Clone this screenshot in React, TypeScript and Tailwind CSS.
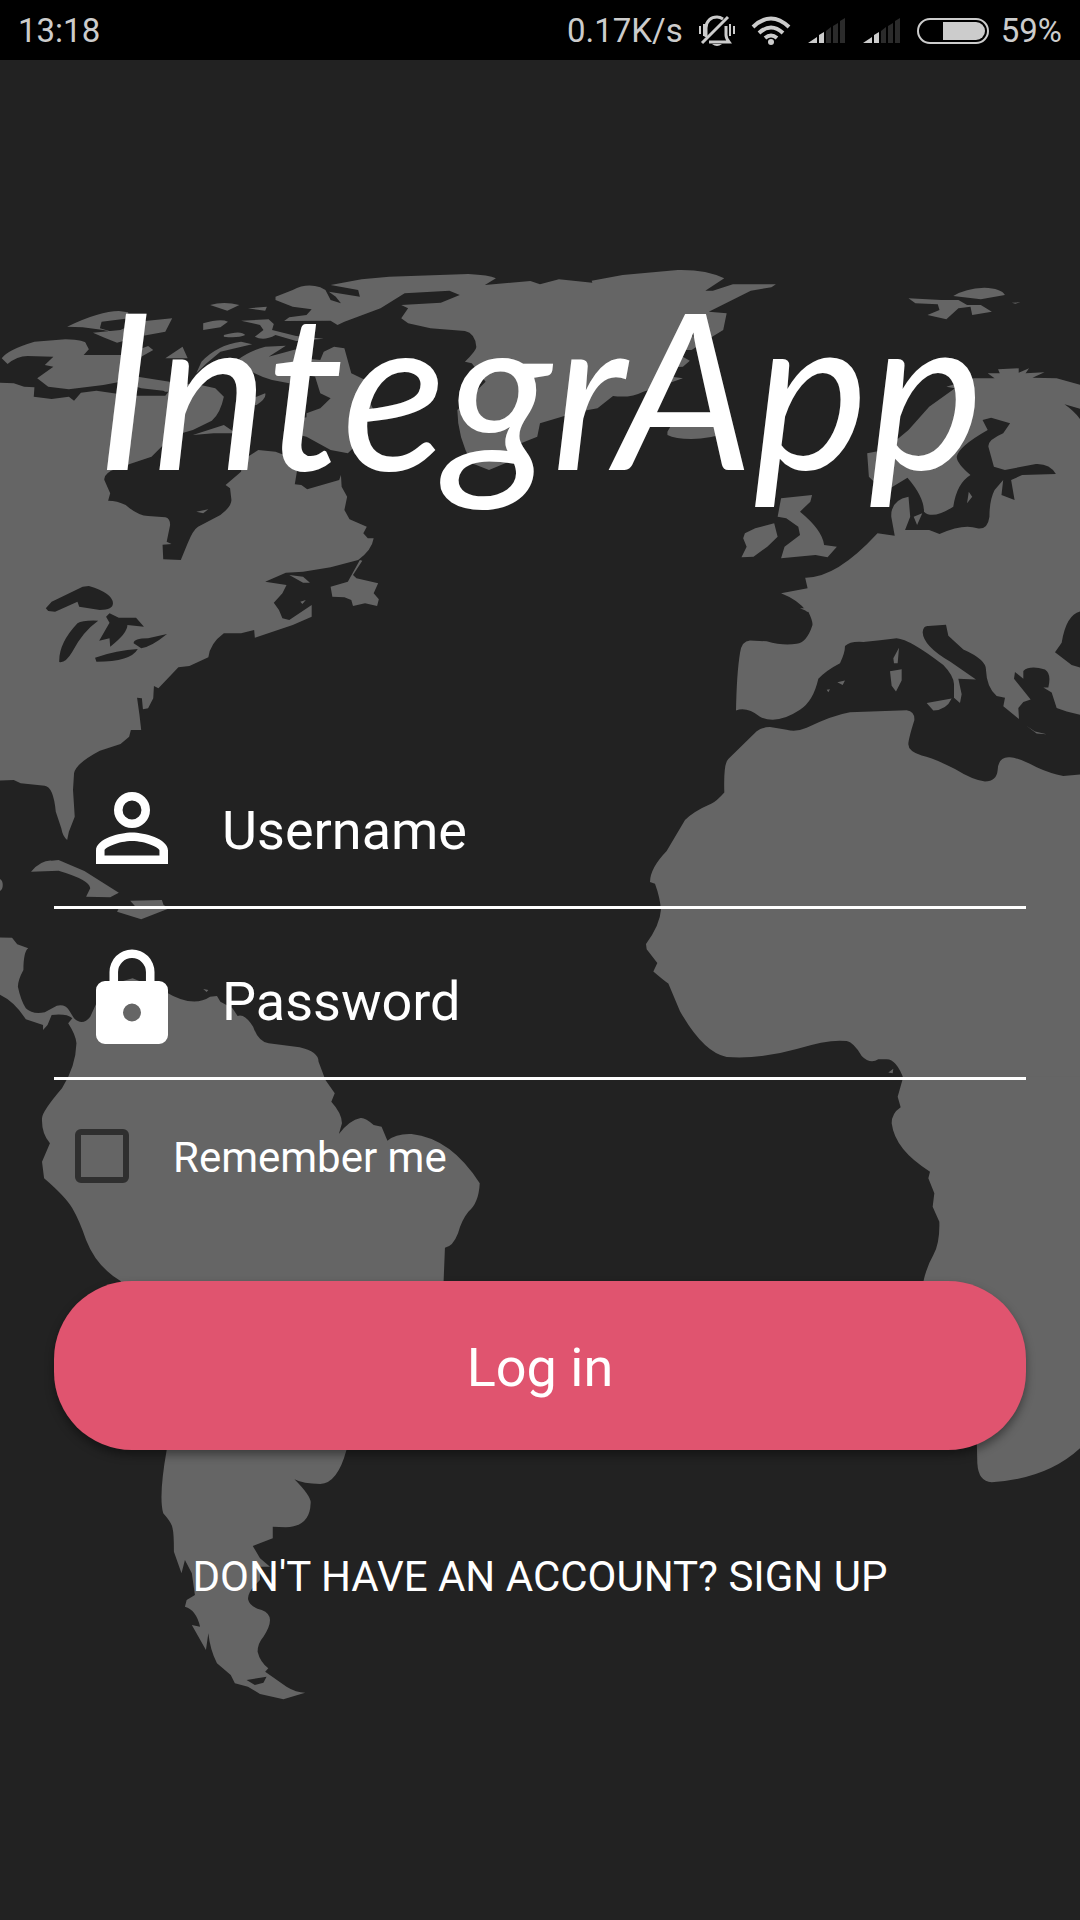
import { useState } from 'react';

function WorldMap() {
  return (
    <svg
      aria-hidden="true"
      viewBox="0 0 1080 1920"
      preserveAspectRatio="xMidYMin slice"
      className="absolute inset-0 h-full w-full"
      fill="#656565"
    >
      {/* Americas, Greenland and Iceland */}
      <g transform="translate(0 250) scale(.34439 .33333)">
        <path d="M-9 398L40 400 70 410 100 412 98 440 150 447 200 440 215 452 235 428 280 422 380 437 480 437 500 410 560 400 625 415 650 440 Q640 490 615 512L560 540 500 558 440 620 340 655 Q300 670 303 690L320 730 314 752 Q340 752 365 765 400 797 430 798L480 802 Q494 805 494 825L484 875 498 882 472 884 474 928 525 930 545 880 Q560 840 575 830L640 795Q672 770 672 750L668 715 655 705 700 665 702 645 690 640 750 600 800 605 878 635 862 665 856 703 875 705 892 718 985 690 990 675 992 710 1008 740 1000 780 1015 808 1065 830 1055 850 1068 865 1085 865 Q1080 900 1040 930L960 952 880 965 830 968 770 995 832 1005 820 1030 795 1058 810 1080 820 1105 840 1110 905 1065 905 1100 850 1125 740 1163 738 1140 700 1150 650 1150 Q610 1180 605 1222L550 1248 518 1252 460 1315 447 1308 445 1345 430 1375 415 1378 412 1345 398 1343 405 1395 410 1440 380 1440 375 1460 350 1482 290 1502 Q220 1540 215 1570L212 1620 217 1700 200 1745 195 1770 Q182 1760 178 1735L162 1685Q155 1610 130 1607L60 1600 40 1590 -9 1592Z" />
        <path d="M1045 930L1010 995 960 1010 965 1040 1000 1042 1020 1050 1025 1068 1060 1060 1095 1068 1100 1048 1085 1030 1098 1000 1035 985 1025 975 1052 932ZM840 975L880 980 900 998 880 998ZM570 785L605 778 590 790ZM675 612L700 598 690 615ZM872 1055L888 1050 878 1062Z" />
        <path d="M90 1865Q120 1830 150 1832L170 1830 245 1863 345 1928 320 1942 250 1940 262 1915Q262 1890 170 1862ZM378 1952L470 1950 475 1965 492 1975 410 2008 340 1985 345 1975 395 1972ZM-9 1885Q8 1885 8 1905 8 1925 -9 1925ZM560 555L650 525 685 550 620 550Z" />
        {/* Arctic archipelago */}
        <path d="M5 325Q20 300 100 275L190 268 Q250 270 250 282L258 298 243 315 370 315 400 300 430 288 445 300 410 320 390 350 400 380 520 400 500 425 410 415 350 395 300 405 200 418 140 410 108 385 155 350 130 345 155 320 80 318 Q50 318 22 342ZM195 230Q290 183 345 183L372 187 375 205 295 215 290 235 340 250 300 240 240 232ZM270 248L350 240 400 215 500 205 480 245 400 260 340 278 300 262ZM610 165Q650 153 695 165L660 182ZM720 175L775 170 770 182ZM590 220Q640 205 662 215L640 232 590 240ZM650 255Q700 240 712 255 690 265 650 260ZM700 212L780 208 795 222 790 240 860 258 940 266 860 273 800 255 Q765 275 740 260L765 240 755 225ZM480 325L530 290 545 325ZM585 335Q630 285 700 275L732 283 640 305 600 340 570 370ZM690 330Q720 305 770 290L830 287 780 320 860 298 885 300 880 325 930 330 940 305 970 290 1000 295 1020 370 1080 400 1080 440 1050 430 1075 460 1090 490 1020 485 Q1045 520 1043 545L1040 580 1010 610 960 600 890 560 830 545 850 510 890 502 890 490 930 475 960 445 930 430 915 380 855 370 840 400 790 390 Q720 370 690 330ZM720 450L770 430 Q775 445 745 465L700 470ZM440 405L520 400 520 425 480 425Z" />
        <path d="M800 140L850 120Q890 98 930 112L945 120 960 150 990 160 975 140 955 125 1045 140 1040 120 960 105 1050 88 1130 80 1360 72Q1420 75 1440 85L1408 105 1540 93 1568 103 1623 88 1720 98 1718 92 1808 75 1968 60Q2050 58 2103 85L2048 122 2070 122 2128 103 2253 103 2240 112 2180 122 2058 185 2110 190 2100 240 2068 260 2008 300 1948 300 2003 332 1983 350 1950 352 1913 375 1983 385Q1900 415 1868 425 1830 445 1780 438L1735 475 1680 485 1568 520 1560 560 1500 585 1490 630 1420 660 1370 640Q1328 560 1328 480L1410 395 1370 340 1350 335Q1385 300 1383 290 1380 250 1350 243L1250 235 1185 220 1165 205 1185 175 1165 165 1280 158 1335 135 1305 122 1175 130 1105 175 1000 215 980 225 960 212 825 213 840 202 890 195 905 178 850 170 800 150Z" />
        <path d="M1938 545L1963 500 1985 508 2038 493 2038 503 2118 485 2120 545Q2060 567 2008 567 1960 567 1938 555Z" />
        {/* South America */}
        <path d="M-9 2062L35 2063 50 2083 82 2095Q68 2105 68 2160 52 2190 52 2210 60 2250 75 2275 95 2295 130 2287L165 2267Q190 2262 200 2280L215 2305Q240 2330 262 2300L280 2260 300 2210 385 2185 480 2225Q560 2275 610 2240L630 2238 640 2255 675 2275 690 2298Q710 2290 735 2330 750 2375 780 2380L870 2392Q925 2405 925 2435L945 2490 972 2530 962 2555Q993 2590 993 2620L984 2652Q1015 2610 1047 2604 1060 2602 1085 2625L1108 2630 1125 2672Q1150 2650 1195 2652 1310 2665 1393 2800 1390 2860 1360 2885 1340 2910 1330 2950 1315 2990 1292 2993L1288 3095 1230 3270 1130 3330 1080 3450 1006 3600Q980 3700 930 3702 880 3702 855 3688 905 3740 902 3760 900 3830 830 3832L792 3830 792 3865 734 3888 755 3925 784 3950 755 3950 755 3990 Q715 4030 721 4050 725 4070 760 4080 784 4090 784 4110 784 4130 765 4160 748 4180 748 4205 755 4235 779 4255L770 4265 832 4310Q860 4328 886 4328L823 4348 755 4332 720 4310 682 4300 670 4275 630 4240 Q610 4200 605 4150L598 4200 557 4125 581 4130Q570 4080 537 4070L542 4050 566 4035 557 3970 537 3930 527 3970 505 3905Q505 3850 501 3835 500 3820 474 3790 460 3740 484 3600L480 3500 440 3300 350 3093Q280 3050 250 2970 230 2910 210 2875 190 2840 128 2785L122 2735 145 2680Q120 2650 122 2605 122 2585 180 2515 220 2450 222 2380 220 2355 198 2320L210 2305Q195 2290 150 2295L138 2325 125 2340 125 2325 75 2308Q40 2250 -9 2230ZM590 2217L605 2220 600 2226Z" />
        <path fill="#222" d="M133 1075L150 1055 240 1010 258 1008Q328 1030 328 1060 328 1080 290 1080L230 1070 225 1055 160 1085 140 1083ZM172 1236Q170 1180 225 1120 240 1110 285 1112 240 1145 210 1205 190 1240 172 1236ZM288 1172L318 1118 308 1100 318 1090 345 1103 395 1103 418 1130 370 1125Q370 1150 320 1190L318 1165ZM276 1223Q340 1200 400 1197 380 1235 280 1235ZM388 1180Q388 1165 430 1165L485 1152Q440 1190 410 1195ZM716 4290L774 4280 765 4298 740 4305ZM1990 250L2030 238 2015 260ZM2020 275L2045 270 2035 290Z" />
      </g>
      {/* Northern Europe and Svalbard */}
      <g transform="translate(540 250) scale(.34439 .33333)">
        <path d="M1070 145L1165 150 1215 150 1240 165 1280 165 1312 185 1255 195 1250 170 1215 175 1180 208 1125 195 1160 180 1155 163 1090 160ZM1200 138Q1235 115 1290 113 1340 115 1350 135L1280 148ZM1370 158L1395 157 1380 161Z" />
        <path d="M1580 408L1500 385 1430 383 1465 367 1410 370 1420 355 1390 368 1390 355 1330 358 1335 370 1300 370 1320 385 1260 385 1180 410 1205 415 1130 470 1070 540 1000 600 950 610 955 680 1000 725 1067 683Q1115 740 1115 785 1140 810 1200 770 1210 700 1250 675 1210 640 1210 620 1215 590 1300 540L1285 510 1310 503 1365 520 1345 550Q1300 570 1302 590L1318 650 1350 660 1440 642 Q1480 640 1498 672L1400 675 1368 690 1378 750 1340 735 1345 690 1320 720Q1305 750 1305 800 1300 840 1270 835 1230 820 1160 852L1130 840 1060 840 1075 800 1070 740Q1018 750 1020 800L1030 857 980 850Q860 985 770 983L777 1015 700 1030Q750 1050 775 1085L1580 1085ZM1085 800L1110 790 1095 825ZM1245 725L1255 740 1240 760Z" />
        <path d="M700 745L790 735 785 755 755 785Q820 840 825 885L862 890 835 922 800 915 700 925 710 890 755 855 750 830 715 805 690 800ZM595 850L625 835 680 820 690 860 660 890 620 920 585 922 600 890 590 865Z" />
        <path fill="#222" d="M1523 463L1580 480 1580 525Q1560 490 1523 463Z" />
      </g>
      {/* Southern Europe, Mediterranean and North Africa */}
      <g transform="translate(600 560) scale(.33333 .34439)">
        <path d="M1450 140L600 140 625 150Q640 180 637 190 620 240 590 243 550 250 500 236L450 234Q425 235 420 270 410 330 408 437 440 425 480 455 530 480 600 435 640 410 655 345 680 320 720 300 735 270 735 250 750 235 790 238L840 233 890 227Q930 230 1030 305 1060 335 1062 360L1062 400 1080 415 1085 390 1075 345 1128 347 1050 295Q970 250 968 210 970 190 985 192L1038 188 1045 220 1090 260Q1160 290 1158 320 1160 370 1190 395L1215 400 1210 425 1257 462 1255 430 1270 412 1292 405 1242 345 1245 325 1270 345 1270 322Q1290 305 1335 318 1355 330 1345 370L1330 370 1355 385 1370 430 1400 440 1450 452Z" />
        <path d="M870 323L905 317 905 350 888 382 875 365ZM880 285L897 255 893 300 882 300ZM980 415L1055 402Q1040 435 1000 437ZM712 355L735 350 728 363ZM680 377L690 375 685 384ZM1280 482L1305 498 1340 506 1310 504Z" />
        <path d="M1450 622L1390 627Q1350 620 1310 602 1260 575 1230 573 1195 570 1193 610 1190 643 1155 643 1120 640 1065 607 1000 575 965 568 925 555 925 535 925 520 943 465 945 440 920 436L750 442Q700 450 620 487 590 500 560 493L510 485Q490 485 470 497L385 578Q370 590 373 675 350 700 335 707 280 730 255 755L200 845Q150 895 150 935L165 940Q180 980 183 1015 180 1060 138 1115L140 1130 172 1170 160 1195Q190 1220 205 1230L240 1310Q310 1430 380 1443 480 1450 590 1420 690 1390 740 1397 760 1400 785 1440 810 1465 835 1450L860 1450Q890 1450 912 1510L1450 1510ZM865 1488L880 1477 878 1490Z" />
        <path fill="#222" d="M1365 268L1385 240Q1400 150 1450 148L1450 315 1415 305Z" />
      </g>
      {/* Southern Africa */}
      <path
        transform="translate(600 1030) scale(.33333)"
        d="M910 140L893 200 902 232Q875 250 875 280 885 360 990 425L985 445 1003 490 998 530 1018 575Q1020 640 1000 675 980 710 970 755L960 900 1080 1100 1130 1220 1132 1300Q1135 1355 1175 1357 1350 1345 1450 1245L1450 140Z"
      />
    </svg>
  );
}

function StatusIcons() {
  return (
    <div className="flex items-center gap-4">
      <svg aria-label="Muted" viewBox="0 0 36 32" className="h-8 w-9" fill="none" stroke="#ccc" strokeWidth="2">
        <path d="M7 22V13C7 6 12 2 18 2q3 0 6 2M27 11v9q0 3 3 7H10" strokeWidth="3" />
        <path d="M3 28 29 2" strokeWidth="3" />
        <path d="M1 11v8M5 9v12M31 9v12M35 11v8" />
        <path d="M13 29h10q-5 4-10 0z" fill="#ccc" stroke="none" />
      </svg>
      <svg aria-label="Wi-Fi" viewBox="0 0 40 30" className="h-[30px] w-10" fill="none" stroke="#ccc" strokeWidth="4">
        <path d="M2 11Q20-6 38 11M8 17Q20 6 32 17M14 22Q20 17 26 22" />
        <circle cx="20" cy="26" r="3" fill="#ccc" stroke="none" />
      </svg>
      {[1, 2].map((sim) => (
        <svg key={sim} aria-label={`SIM ${sim} signal`} viewBox="0 0 37 26" className="mr-px ml-px h-[26px] w-[37px]">
          <path fill="#ccc" d="M0 25 9 19V25ZM11 17 16 14V25H11Z" />
          <path fill="#2b2b2b" d="M18 13 23 9V25H18ZM25 8 30 5V25H25ZM32 3 37 0V25H32Z" />
        </svg>
      ))}
      <svg aria-label="Battery" viewBox="0 0 72 26" className="-mr-1 h-[26px] w-[72px]">
        <rect x="1" y="1" width="70" height="24" rx="12" fill="none" stroke="#ccc" strokeWidth="2" />
        <path d="M26 4H59a9 9 0 0 1 0 18H26Z" fill="#ccc" />
      </svg>
    </div>
  );
}

const fieldRow = 'flex h-[171px] items-center border-b-[3px] border-white pt-3 pl-6';
const fieldInput =
  'ml-9 h-20 min-w-0 flex-1 bg-transparent pt-1 text-[54px] text-white outline-none placeholder:text-white placeholder:opacity-100';

export default function App() {
  const [remember, setRemember] = useState(false);

  return (
    <div className="relative flex min-h-screen flex-col overflow-hidden bg-[#222] font-[Roboto,sans-serif] text-white">
      <WorldMap />

      <header className="relative flex h-[60px] items-center justify-between bg-black px-[18px] pt-[2px] text-[33px] text-[#ccc]">
        <time>13:18</time>
        <div className="flex items-center gap-4">
          <span>0.17K/s</span>
          <StatusIcons />
          <span>59%</span>
        </div>
      </header>

      <main className="relative flex flex-col px-[54px]">
        <h1 className="mt-[206px] text-center font-[Lato,sans-serif] text-[218px] leading-[240px] whitespace-nowrap italic">
          IntegrApp
        </h1>

        <form className="mt-[232px] flex flex-col" onSubmit={(e) => e.preventDefault()}>
          <div className={fieldRow}>
            <label htmlFor="username" aria-label="Username">
              <svg viewBox="0 0 24 24" className="size-[108px]" fill="#fff">
                <path d="M12 5.9a2.1 2.1 0 1 1 0 4.2 2.1 2.1 0 0 1 0-4.2m0 9c2.970 0 6.100 1.460 6.100 2.100v1.100H5.900V17c0-.64 3.130-2.100 6.100-2.100M12 4a4 4 0 1 0 0 8 4 4 0 0 0 0-8m0 9c-2.670 0-8 1.340-8 4v3h16v-3c0-2.660-5.330-4-8-4" />
              </svg>
            </label>
            <input id="username" type="text" placeholder="Username" className={fieldInput} />
          </div>

          <div className={fieldRow}>
            <label htmlFor="password" aria-label="Password">
              <svg viewBox="0 0 24 24" className="size-[108px]" fill="#fff">
                <path d="M18 8h-1V6A5 5 0 0 0 7 6v2H6a2 2 0 0 0-2 2v10a2 2 0 0 0 2 2h12a2 2 0 0 0 2-2V10a2 2 0 0 0-2-2m-6 9a2 2 0 1 1 0-4 2 2 0 0 1 0 4m3.100-9H8.900V6a3.100 3.100 0 0 1 6.200 0z" />
              </svg>
            </label>
            <input id="password" type="password" placeholder="Password" className={fieldInput} />
          </div>

          <label className="mt-[46px] ml-[21px] flex items-center self-start text-[42px] leading-[56px]">
            <input
              type="checkbox"
              checked={remember}
              onChange={(e) => setRemember(e.target.checked)}
              className="size-[54px] appearance-none rounded-md border-6 border-[#2f2f2f] checked:bg-[#e0546f]"
            />
            <span className="ml-11 pt-1">Remember me</span>
          </label>

          <button
            type="submit"
            className="mt-[95px] h-[169px] rounded-[78px] bg-[#e0546f] pt-1 text-[54px] text-white shadow-[0_5px_10px_rgba(0,0,0,0.4)]"
          >
            Log in
          </button>
        </form>

        <a href="#signup" className="mt-[99px] self-center text-[42px] leading-[56px] uppercase">
          Don't have an account? Sign up
        </a>
      </main>
    </div>
  );
}
